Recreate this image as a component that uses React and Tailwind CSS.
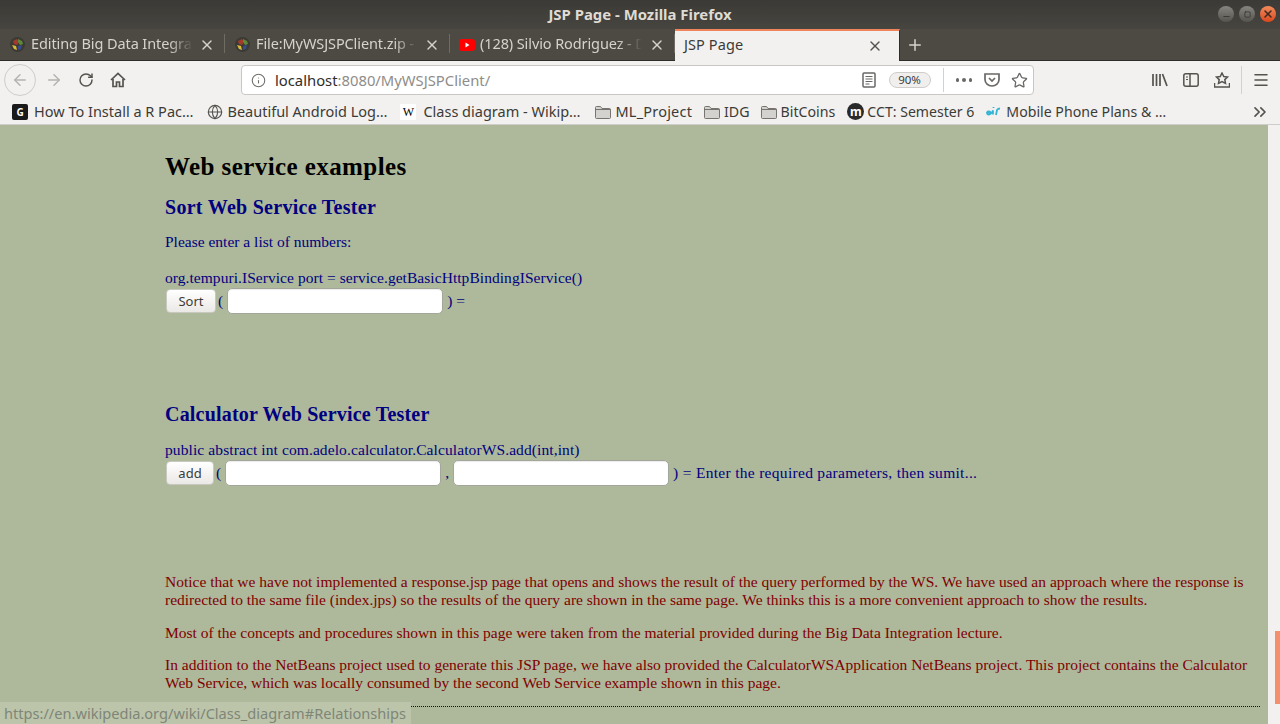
import React from 'react';
import { X, Plus, ArrowLeft, ArrowRight, RotateCw, Info, Star, ChevronsRight, Menu, Globe, Minus, Square } from 'lucide-react';

const uiFont = 'font-["Noto_Sans",sans-serif]';
const pageFont = 'font-["Liberation_Serif",serif]';

const WikiIcon = () => (
  <svg width="17" height="17" viewBox="0 0 17 17" className="shrink-0">
    <circle cx="8.5" cy="8.5" r="7.5" fill="#3c3a34" />
    <path d="M4 5l4-2 2 3-2 3-3-1z" fill="#a33a2c" />
    <path d="M9 3l4 2 1 3-3 1-2-3z" fill="#5c8a3a" />
    <path d="M3 9l4 1 1 4-3-1z" fill="#d8b93c" />
    <path d="M9 10l4-1-1 4-3 1z" fill="#3a4a8c" />
  </svg>
);

const YoutubeIcon = () => (
  <svg width="16" height="12" viewBox="0 0 16 12" className="shrink-0">
    <rect width="16" height="12" rx="3" fill="#f00" />
    <path d="M6.5 3.5l4 2.5-4 2.5z" fill="#fff" />
  </svg>
);

const FolderIcon = () => (
  <svg width="16" height="14" viewBox="0 0 16 14" className="shrink-0">
    <path d="M.5 12.5v-10a1 1 0 011-1h4l1.5 2h7.500a1 1 0 011 1v8a1 1 0 01-1 1h-13a1 1 0 01-1-1z" fill="#d4d2cf" stroke="#77746f" />
    <path d="M.5 4.500h15" stroke="#77746f" />
  </svg>
);

const Tab = ({ icon, title }) => (
  <div className="flex items-center w-[225px] h-full pl-[9px] pr-[10px] relative">
    {icon}
    <span className="ml-[5px] w-[162px] -translate-y-px overflow-hidden whitespace-nowrap text-[14.5px] tracking-[-0.1px] text-[#d6d3cd] [mask-image:linear-gradient(to_right,black_85%,transparent)]">{title}</span>
    <X size={16} strokeWidth={2} className="ml-auto text-[#d6d3cd]" />
    <div className="absolute right-0 top-[5px] bottom-[7px] w-px bg-[#6f6c64]" />
  </div>
);

const Bookmark = ({ icon, label, className = 'ml-[15px]', gap = 'gap-[5px]', text = '' }) => (
  <div className={`flex items-center whitespace-nowrap ${gap} ${className}`}>
    {icon}
    <span className={text}>{label}</span>
  </div>
);

const TextBox = ({ className }) => (
  <div className={`h-[26px] rounded-[5px] bg-white border border-[#a3a69a] shadow-[inset_0_1px_1px_rgba(0,0,0,0.08)] ${className}`} />
);

const PageButton = ({ label, className }) => (
  <div className={`h-[24px] flex items-center justify-center rounded-[4px] bg-gradient-to-b from-white to-[#ebe9e6] border border-[#c8c8c0] text-[13px] text-[#3c3b37] ${uiFont} ${className}`}>{label}</div>
);

export default function App() {
  return (
    <div className={`w-[1280px] h-[724px] overflow-hidden relative flex flex-col ${uiFont}`}>
      {/* Title bar */}
      <div className="h-[29px] shrink-0 bg-gradient-to-b from-[#3b3a36] to-[#464540] flex items-center justify-center relative">
        <span className="text-[14.900px] font-bold text-[#dfdbd2]">JSP Page - Mozilla Firefox</span>
        <div className="absolute right-[4px] top-[6px] flex gap-[5px]">
          <div className="w-4 h-4 rounded-full bg-gradient-to-b from-[#87857f] to-[#55544f] flex items-center justify-center"><Minus size={9} strokeWidth={3} className="text-[#3b3a36] translate-y-[2px]" /></div>
          <div className="w-4 h-4 rounded-full bg-gradient-to-b from-[#87857f] to-[#55544f] flex items-center justify-center"><Square size={7} strokeWidth={3} className="text-[#3b3a36]" /></div>
          <div className="w-4 h-4 rounded-full bg-gradient-to-b from-[#f08a5a] to-[#d9471c] flex items-center justify-center"><X size={12} strokeWidth={3} className="text-[#3b2a22]" /></div>
        </div>
      </div>

      {/* Tab strip */}
      <div className="h-[32px] shrink-0 bg-[#4c4a43] border-b border-[#2e2d29] flex items-stretch">
        <Tab icon={<WikiIcon />} title="Editing Big Data Integration" />
        <Tab icon={<WikiIcon />} title="File:MyWSJSPClient.zip - Wiki" />
        <Tab icon={<YoutubeIcon />} title="(128) Silvio Rodriguez - Dia" />
        <div className="w-[225px] -mb-px bg-[#f2f1ef] border-t-2 border-[#f0845c] flex items-center pl-[9px] pr-[16px] border-r border-r-[#2e2d29]">
          <span className="text-[14.5px] tracking-[0.1px] -translate-y-px text-[#3c3b37]">JSP Page</span>
          <X size={16} strokeWidth={2} className="ml-auto text-[#55534e]" />
        </div>
        <Plus size={18} strokeWidth={2} className="ml-[6px] self-center text-[#d6d3cd]" />
      </div>

      {/* Navigation bar */}
      <div className="h-[37px] shrink-0 bg-[#f2f1ef] flex items-center pt-[1px] relative">
        <div className="ml-[4px] w-[32px] h-[32px] rounded-full border border-[#cfcdca] flex items-center justify-center">
          <ArrowLeft size={18} strokeWidth={2} className="text-[#b5b3b0]" />
        </div>
        <ArrowRight size={18} strokeWidth={2} className="ml-[9px] text-[#b5b3b0]" />
        <RotateCw size={16} strokeWidth={2.2} className="ml-[15px] text-[#55534e]" />
        <svg width="16" height="16" viewBox="0 0 16 16" className="ml-[16px]" fill="none" stroke="#55534e" strokeWidth="1.700">
          <path d="M1 8l7-6.500L15 8" />
          <path d="M3 7v7.500h3.500V10h3v4.500H13V7" />
        </svg>
        <div className="ml-[115px] w-[793px] h-[30px] bg-white border border-[#c9c7c4] rounded-[4px] flex items-center">
          <Info size={15} strokeWidth={1.700} className="ml-[9px] text-[#6e6c68]" />
          <span className="ml-[9px] text-[14.800px] text-[#2f2e2b]">localhost<span className="text-[#8f8d89]">:8080/MyWSJSPClient/</span></span>
          <svg width="14" height="16" viewBox="0 0 14 16" className="ml-auto" fill="none" stroke="#6a6865" strokeWidth="1.500">
            <rect x="1" y="1" width="12" height="14" rx="1" />
            <path d="M3.500 4.500h7M3.500 7h7M3.500 9.500h7M3.500 12h4" strokeWidth="1" />
          </svg>
          <div className="ml-[13px] w-[42px] h-[16px] rounded-full bg-[#f0efed] border border-[#cfcdca] flex items-center justify-center text-[11.500px] text-[#3c3b37]">90%</div>
          <div className="ml-[12px] w-px h-[24px] bg-[#d3d1ce]" />
          <div className="ml-[12px] flex gap-[3px]">
            <div className="w-[3.500px] h-[3.500px] rounded-full bg-[#6a6865]" />
            <div className="w-[3.500px] h-[3.500px] rounded-full bg-[#6a6865]" />
            <div className="w-[3.500px] h-[3.500px] rounded-full bg-[#6a6865]" />
          </div>
          <svg width="16" height="14" viewBox="0 0 16 14" className="ml-[12px]" fill="none" stroke="#6a6865" strokeWidth="1.700">
            <path d="M1 1h14v5.500a7 6.500 0 01-14 0z" />
            <path d="M5 5l3 3 3-3" />
          </svg>
          <Star size={17} strokeWidth={1.800} className="ml-[11px] mr-[5px] text-[#6a6865]" />
        </div>
        <svg width="16" height="14" viewBox="0 0 16 14" className="ml-[118px]" fill="none" stroke="#55534e" strokeWidth="1.700">
          <path d="M1 1v12M4.500 1v12M8 1v12M10.500 1l4.500 12" />
        </svg>
        <svg width="16" height="14" viewBox="0 0 16 14" className="ml-[15px]" fill="none" stroke="#55534e" strokeWidth="1.500">
          <rect x=".8" y=".8" width="14.400" height="12.400" rx="2" />
          <path d="M7 1v12" />
          <path d="M3 4h2M3 6.500h2" strokeWidth="1" />
        </svg>
        <svg width="16" height="16" viewBox="0 0 16 16" className="ml-[15px]" fill="none" stroke="#55534e" strokeWidth="1.500">
          <path d="M8 1l1.800 3.500 3.700.500-2.700 2.600.700 3.700L8 9.500l-3.500 1.800.700-3.700L2.500 5l3.700-.500z" />
          <path d="M.5 11v4h15v-4" />
        </svg>
        <div className="ml-[11px] w-px h-[28px] bg-[#d3d1ce]" />
        <Menu size={18} strokeWidth={2} className="ml-[10px] text-[#55534e]" />
      </div>

      {/* Bookmarks */}
      <div className="h-[27px] shrink-0 bg-[#f2f1ef] border-b border-[#cfcdca] flex items-center pt-[2px] text-[14.5px] text-[#3c3b37] relative">
        <Bookmark
          className="ml-[12px]"
          gap="gap-[6px]"
          label="How To Install a R Pac…"
          icon={<div className="w-4 h-4 rounded-[2px] bg-[#1a1a1a] flex items-center justify-center text-[10px] font-bold text-white">G</div>}
        />
        <Bookmark label="Beautiful Android Log…" gap="gap-[4px]" className="ml-[14px]" icon={<Globe size={16} strokeWidth={1.700} className="text-[#55534e]" />} />
        <Bookmark
          label="Class diagram - Wikip…"
          className="ml-[13px]"
          gap="gap-[7px]"
          icon={<div className={`w-4 h-4 bg-white flex items-center justify-center text-[12px] text-black ${pageFont}`}>W</div>}
        />
        <Bookmark label="ML_Project" className="ml-[14px]" text="tracking-[0.2px]" icon={<FolderIcon />} />
        <Bookmark label="IDG" className="ml-[12px]" gap="gap-[4px]" text="text-[14.200px]" icon={<FolderIcon />} />
        <Bookmark label="BitCoins" className="ml-[11px]" gap="gap-[4px]" text="text-[14.200px]" icon={<FolderIcon />} />
        <Bookmark
          label="CCT: Semester 6"
          className="ml-[12px]"
          gap="gap-[3px]"
          text="text-[14.100px]"
          icon={<div className="w-[17px] h-[17px] rounded-full bg-[#2a2a2a] flex items-center justify-center text-[12px] font-bold leading-none text-white">m</div>}
        />
        <Bookmark
          label="Mobile Phone Plans & …"
          className="ml-[12px]"
          gap="gap-[5px]"
          text="text-[14.150px]"
          icon={
            <svg width="15" height="11" viewBox="0 0 15 11" fill="none" stroke="#35b5d5" strokeWidth="1.800">
              <path d="M1 6.500h3.500a2 2 0 00-3.500 0c0 3 3 2.500 5 0l1-2v4M10 9l1-5c1-1.500 2-1.500 3-1.500" />
              <path d="M7.500 1v1" />
            </svg>
          }
        />
        <ChevronsRight size={20} strokeWidth={2} className="ml-auto mr-[10px] text-[#55534e]" />
      </div>

      {/* Page content */}
      <div className="flex-1 min-h-0 flex bg-[#aeb89a]">
        <div className={`flex-1 min-w-0 pl-[165px] pr-[8px] ${pageFont} text-[15.500px] leading-[16px] text-[#000080]`}>
          <h1 className="mt-[29px] text-[25px] tracking-[0.42px] leading-[26px] font-bold text-black">Web service examples</h1>
          <h2 className="mt-[16px] text-[20px] tracking-[0.28px] leading-[22px] font-bold">Sort Web Service Tester</h2>
          <p className="mt-[16px]">Please enter a list of numbers:</p>
          <p className="mt-[20px] tracking-[0.05px]">org.tempuri.IService port = service.getBasicHttpBindingIService()</p>
          <div className="mt-[2px] flex items-center h-[26px] pl-px">
            <PageButton label="Sort" className="w-[50px]" />
            <span className="ml-[2px]">(</span>
            <TextBox className="ml-[4px] w-[216px]" />
            <span className="ml-[4px]">) =</span>
          </div>
          <h2 className="mt-[89px] text-[20px] tracking-[0.2px] leading-[22px] font-bold">Calculator Web Service Tester</h2>
          <p className="mt-[17px] tracking-[0.1px]">public abstract int com.adelo.calculator.CalculatorWS.add(int,int)</p>
          <div className="mt-[2px] flex items-center h-[26px] pl-px">
            <PageButton label="add" className="w-[48px]" />
            <span className="ml-[2px]">(</span>
            <TextBox className="ml-[4px] w-[216px]" />
            <span className="ml-[4px]">,</span>
            <TextBox className="ml-[4px] w-[216px]" />
            <span className="ml-[4px] tracking-[0.3px]">) = Enter the required parameters, then sumit...</span>
          </div>
          <div className="mt-[87px] leading-[17.500px] text-[#800000]">
            <p>
              Notice that we have not implemented a response.jsp page that opens and shows the result of the query performed by the WS. We have used an approach where the response is<br />
              redirected to the same file (index.jps) so the results of the query are shown in the same page. We thinks this is a more convenient approach to show the results.
            </p>
            <p className="mt-[16px]">Most of the concepts and procedures shown in this page were taken from the material provided during the Big Data Integration lecture.</p>
            <p className="mt-[14.500px]">
              In addition to the NetBeans project used to generate this JSP page, we have also provided the CalculatorWSApplication NetBeans project. This project contains the Calculator<br />
              Web Service, which was locally consumed by the second Web Service example shown in this page.
            </p>
          </div>
          <div className="mt-[15px] border-t border-dotted border-[#000080]" />
        </div>
        {/* Scrollbar */}
        <div className="w-[12px] shrink-0 bg-[#f2f1ef] flex justify-end pt-[506px]">
          <div className="w-[5px] h-[73px] bg-[#f4906c]" />
        </div>
      </div>

      {/* Status link overlay */}
      <div className="absolute left-0 bottom-0 h-[22px] w-[411px] bg-[#bcc5aa] flex items-center pl-[4px] pt-[1px] text-[14.600px] text-[#7f8679] whitespace-nowrap">
        https://en.wikipedia.org/wiki/Class_diagram#Relationships
      </div>
    </div>
  );
}
